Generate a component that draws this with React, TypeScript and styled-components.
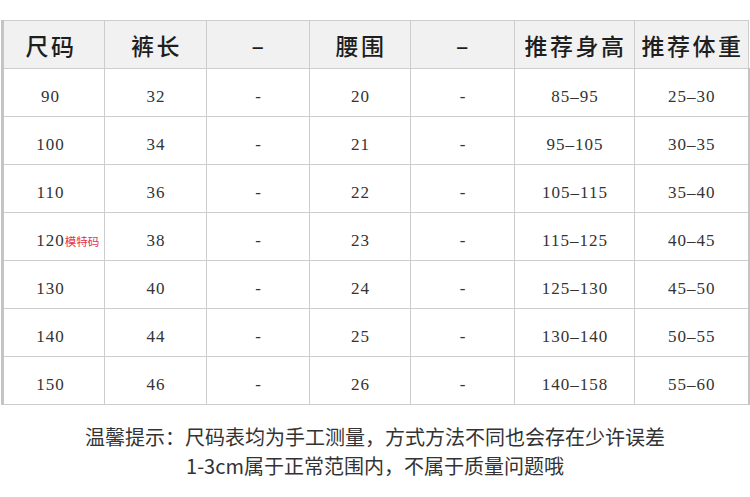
import React from "react";
import styled, { createGlobalStyle } from "styled-components";

const Global = createGlobalStyle`
  html, body { margin: 0; padding: 0; background: #fff; }
  body { width: 750px; height: 497px; overflow: hidden; }
  th, td { box-sizing: border-box; }
`;

const Page = styled.div`
  width: 750px;
  padding-top: 20px;
  display: flex;
  flex-direction: column;
  align-items: flex-start;
`;

const Table = styled.table`
  margin-left: 1px;
  border-collapse: collapse;
  table-layout: fixed;
  width: 746px;
  border-left: 3px solid #c4c4c4;
`;

const HeadCell = styled.th<{ $w: number; $first?: boolean }>`
  width: ${(p) => p.$w}px;
  height: 48px;
  padding: 0 0 0 2px;
  ${(p) => (p.$first ? "padding-right: 8px;" : "")}
  background: #f1f1f1;
  border: 1px solid #cdcdcd;
  font-family: "Noto Sans CJK SC", "Noto Sans", sans-serif;
  font-weight: 500;
  font-size: 23px;
  color: #1e1e1e;
  text-align: center;
  letter-spacing: 2.5px;
  white-space: nowrap;
`;

const Cell = styled.td<{ $last?: boolean; $first?: boolean }>`
  height: 48px;
  padding: 8px 0 0 1px;
  ${(p) => (p.$first ? "padding-right: 8px;" : "")}
  border: 1px solid #cdcdcd;
  ${(p) => (p.$last ? "border-right: 2px solid #c4c4c4;" : "")}
  font-family: "Liberation Serif", "DejaVu Serif", serif;
  font-size: 17px;
  line-height: 20px;
  letter-spacing: 1px;
  color: #333;
  text-align: center;
  white-space: nowrap;
`;

const Tag = styled.span`
  display: inline-block;
  width: 36px;
  margin-right: -36px;
  text-align: left;
  letter-spacing: 0;
  font-family: "Noto Sans CJK SC", sans-serif;
  font-size: 11.5px;
  color: #e5324f;
`;

const Note = styled.div`
  align-self: stretch;
  margin-top: 17px;
  font-family: "Noto Sans CJK SC", "Noto Sans", sans-serif;
  font-size: 20px;
  line-height: 29px;
  color: #333;
  text-align: center;
`;

const widths = [102, 102, 103, 101, 104, 120, 114];
const heads = ["尺码", "裤长", "–", "腰围", "–", "推荐身高", "推荐体重"];

const rows: [string, string, string, string][] = [
  ["90", "32", "20", "85–95|25–30"],
  ["100", "34", "21", "95–105|30–35"],
  ["110", "36", "22", "105–115|35–40"],
  ["120", "38", "23", "115–125|40–45"],
  ["130", "40", "24", "125–130|45–50"],
  ["140", "44", "25", "130–140|50–55"],
  ["150", "46", "26", "140–158|55–60"],
];

export default function App() {
  return (
    <>
      <Global />
      <Page>
        <Table>
          <thead>
            <tr>
              {heads.map((h, i) => (
                <HeadCell key={i} $w={widths[i]} $first={i === 0}>
                  {h}
                </HeadCell>
              ))}
            </tr>
          </thead>
          <tbody>
            {rows.map(([size, len, waist, rest]) => {
              const [height, weight] = rest.split("|");
              return (
                <tr key={size}>
                  <Cell $first>
                    {size}
                    {size === "120" && <Tag>模特码</Tag>}
                  </Cell>
                  <Cell>{len}</Cell>
                  <Cell>-</Cell>
                  <Cell>{waist}</Cell>
                  <Cell>-</Cell>
                  <Cell>{height}</Cell>
                  <Cell $last>{weight}</Cell>
                </tr>
              );
            })}
          </tbody>
        </Table>
        <Note>
          温馨提示：尺码表均为手工测量，方式方法不同也会存在少许误差
          <br />
          1-3cm属于正常范围内，不属于质量问题哦
        </Note>
      </Page>
    </>
  );
}
